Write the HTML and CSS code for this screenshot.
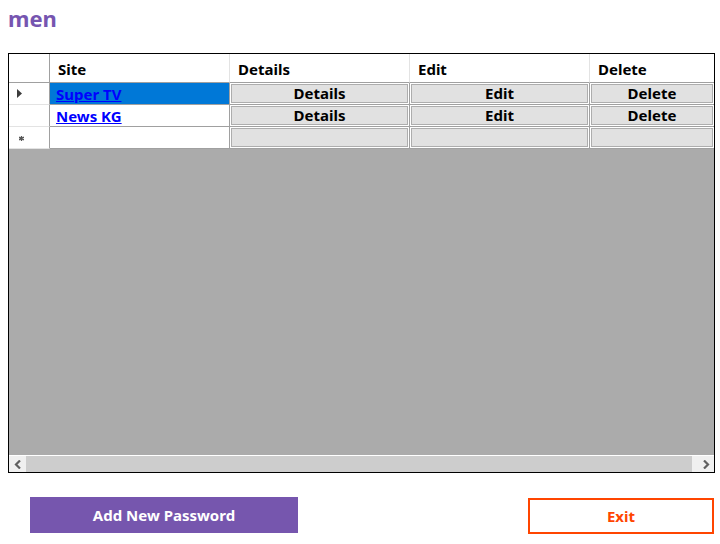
FILE: index.html
```html
<!DOCTYPE html>
<html>
<head>
<meta charset="utf-8">
<link rel="stylesheet" href="styles.css">
</head>
<body>
<div class="page">
  <h1 class="title">men</h1>
  <div class="grid-view">
    <div class="grid">
      <div class="cell rowhead head"></div>
      <div class="cell colhead">Site</div>
      <div class="cell colhead">Details</div>
      <div class="cell colhead">Edit</div>
      <div class="cell colhead last">Delete</div>

      <div class="cell rowhead"><svg class="current" width="5" height="9" viewBox="0 0 5 9"><path d="M0 0 L5 4.5 L0 9 Z" fill="#3c3c3c"/></svg></div>
      <div class="cell site selected"><a href="#" class="link">Super TV</a></div>
      <div class="cell btncell"><span class="btn">Details</span></div>
      <div class="cell btncell"><span class="btn">Edit</span></div>
      <div class="cell btncell last"><span class="btn">Delete</span></div>

      <div class="cell rowhead"></div>
      <div class="cell site"><a href="#" class="link">News KG</a></div>
      <div class="cell btncell"><span class="btn">Details</span></div>
      <div class="cell btncell"><span class="btn">Edit</span></div>
      <div class="cell btncell last"><span class="btn">Delete</span></div>

      <div class="cell rowhead"><svg class="newrow" width="5" height="5" viewBox="0 0 5 5"><path d="M2.5 0 V5 M0 1.2 L5 3.8 M0 3.8 L5 1.2" stroke="#555" stroke-width="1.3"/></svg></div>
      <div class="cell site"></div>
      <div class="cell btncell"><span class="btn"></span></div>
      <div class="cell btncell"><span class="btn"></span></div>
      <div class="cell btncell last"><span class="btn"></span></div>
    </div>
    <div class="empty"></div>
    <div class="hscroll">
      <div class="arrow left"><svg width="8" height="9" viewBox="0 0 8 9"><path d="M6 0.5 L2 4.5 L6 8.5" fill="none" stroke="#606060" stroke-width="2.2"/></svg></div>
      <div class="thumb"></div>
      <div class="arrow right"><svg width="8" height="9" viewBox="0 0 8 9"><path d="M2 0.5 L6 4.5 L2 8.5" fill="none" stroke="#606060" stroke-width="2.2"/></svg></div>
    </div>
  </div>
  <div class="footer">
    <button class="add-btn">Add New Password</button>
    <button class="exit-btn">Exit</button>
  </div>
</div>
</body>
</html>
```

FILE: styles.css
```css
* { box-sizing: border-box; }
html, body {
  margin: 0;
  padding: 0;
  background: #ffffff;
}
body {
  font-family: "Noto Sans", "Open Sans", sans-serif;
  width: 720px;
  height: 544px;
  overflow: hidden;
}
.page {
  padding: 0 5px 0 8px;
}
.title {
  margin: 0;
  height: 53px;
  padding-top: 3px;
  font-size: 22px;
  line-height: 30px;
  font-weight: 700;
  color: #7655b0;
}
.grid-view {
  width: 707px;
  height: 420px;
  border: 1px solid #000;
  display: flex;
  flex-direction: column;
  background: #ababab;
}
.grid {
  display: grid;
  grid-template-columns: 41px 180px 180px 180px 124px;
  grid-template-rows: 29px 22px 22px 22px;
  background: #fff;
}
.cell {
  font-size: 15px;
  font-weight: 700;
  color: #000;
  border-right: 1px solid #a0a0a0;
  border-bottom: 1px solid #a0a0a0;
  display: flex;
  align-items: center;
  overflow: hidden;
  white-space: nowrap;
}
.cell.last { border-right: none; }
.rowhead {
  border-bottom-color: #e3e3e3;
  justify-content: flex-start;
  padding-left: 7px;
}
.rowhead.head { border-bottom-color: #a0a0a0; }
.colhead {
  padding-left: 8px;
  padding-top: 2px;
  border-right-color: #e3e3e3;
}
.site { padding-left: 6px; }
.selected { background: #0078d7; }
.link {
  color: #0000ff;
  text-decoration: underline;
}
.btncell { padding: 1px; }
.btn {
  flex: 1;
  height: 100%;
  background: #e1e1e1;
  border: 1px solid #adadad;
  display: flex;
  align-items: center;
  justify-content: center;
  line-height: 1;
}
.current { margin-left: 1px; }
.newrow { margin-left: 3px; margin-top: 2px; }
.empty { flex: 1; }
.hscroll {
  height: 17px;
  border-top: 1px solid #fff;
  display: flex;
  background: #f0f0f0;
}
.arrow {
  display: flex;
  align-items: center;
  justify-content: center;
}
.arrow.left { width: 17px; }
.arrow.right { width: 22px; padding-left: 5px; }
.thumb {
  flex: 1;
  background: #cdcdcd;
}
.footer {
  display: flex;
  justify-content: space-between;
  align-items: flex-start;
  padding: 24px 1px 0 22px;
}
.add-btn {
  width: 268px;
  height: 36px;
  background: #7656ae;
  color: #fff;
  border: none;
  font-family: "Noto Sans", "Open Sans", sans-serif;
  font-size: 15px;
  font-weight: 700;
  padding: 0;
}
.exit-btn {
  width: 186px;
  height: 36px;
  margin-top: 1px;
  background: #fff;
  color: #ff4500;
  border: 2px solid #ff4500;
  font-family: "Noto Sans", "Open Sans", sans-serif;
  font-size: 15px;
  font-weight: 700;
  padding: 0;
}
```
